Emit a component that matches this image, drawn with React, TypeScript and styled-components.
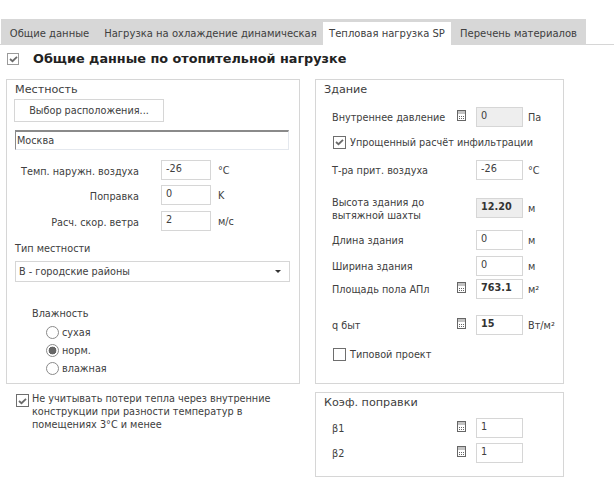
import React from 'react'
import styled, { createGlobalStyle } from 'styled-components'

const COLORS = {
  text: '#404040',
  border: '#d6d6d6',
  tabBar: '#d7d7d7',
  readonly: '#eeeeee',
  icon: '#666666',
}

const Global = createGlobalStyle`
  html, body {
    margin: 0;
    padding: 0;
    background: #fff;
  }
  body {
    font-family: "DejaVu Sans", "Liberation Sans", sans-serif;
    font-size: 9.7px;
    color: ${COLORS.text};
  }
`

const Page = styled.div`
  width: 614px;
  height: 503px;
  overflow: hidden;
  padding-top: 19px;
  box-sizing: border-box;
`

const TabBar = styled.div`
  display: flex;
  height: 25px;
  border-bottom: 1px solid ${COLORS.border};
`

const Tabs = styled.div`
  display: flex;
  width: 585px;
  margin-left: 1px;
  height: 26px;
  background: ${COLORS.tabBar};
  align-items: flex-end;
`

const Tab = styled.div<{ $active?: boolean; $width: number }>`
  width: ${p => p.$width}px;
  height: ${p => (p.$active ? 23 : 26)}px;
  background: ${p => (p.$active ? '#fff' : 'transparent')};
  display: flex;
  align-items: center;
  justify-content: center;
  white-space: nowrap;
  font-size: 10px;
  padding-top: ${p => (p.$active ? 0 : 3)}px;
  box-sizing: border-box;
`

const TitleRow = styled.div`
  display: flex;
  align-items: center;
  height: 17px;
  margin: 5px 0 0 7px;
  gap: 14px;
`

const Title = styled.div`
  font-size: 12.8px;
  font-weight: bold;
  color: #222;
`

const Columns = styled.div`
  display: flex;
  gap: 15px;
  margin: 12px 0 0 6px;
`

const Column = styled.div<{ $width: number }>`
  width: ${p => p.$width}px;
  display: flex;
  flex-direction: column;
`

const Panel = styled.section<{ $height: number; $gapTop?: number }>`
  height: ${p => p.$height}px;
  margin-top: ${p => p.$gapTop ?? 0}px;
  border: 1px solid ${COLORS.border};
  box-sizing: border-box;
  padding-left: 8px;
`

const PanelTitle = styled.div`
  font-size: 11.2px;
  height: 18px;
  line-height: 20px;
`

const ChooseButton = styled.button`
  display: block;
  width: 150px;
  height: 23px;
  margin: 1px 0 0 -1px;
  background: #fff;
  border: 1px solid ${COLORS.border};
  font: inherit;
  color: inherit;
  padding: 0;
`

const CityInput = styled.div`
  width: 274px;
  height: 20px;
  margin-top: 8px;
  box-sizing: border-box;
  border: 1px solid #e4e8ee;
  border-top: 2px solid #8a8a8a;
  border-left: 1px solid #8a8a8a;
  line-height: 18px;
  padding-left: 1px;
`

const FieldRow = styled.div<{ $top: number }>`
  display: flex;
  align-items: center;
  height: 20px;
  margin-top: ${p => p.$top}px;
`

const RightLabel = styled.div`
  width: 124px;
  text-align: right;
  padding-top: 2px;
  white-space: nowrap;
`

const Value = styled.div<{ $readonly?: boolean; $bold?: boolean; $width?: number }>`
  width: ${p => p.$width ?? 50}px;
  height: 20px;
  box-sizing: border-box;
  border: 1px solid ${COLORS.border};
  background: ${p => (p.$readonly ? COLORS.readonly : '#fff')};
  font-weight: ${p => (p.$bold ? 'bold' : 'normal')};
  color: ${p => (p.$bold ? '#333' : COLORS.text)};
  padding-left: 4px;
  line-height: 16px;
  flex: none;
`

const LeftValueSlot = styled.div`
  margin-left: 22px;
`

const Unit = styled.div<{ $gap?: number }>`
  margin-left: ${p => p.$gap ?? 7}px;
  padding-top: ${p => (p.$gap ? 1 : 0)}px;
  white-space: nowrap;
`

const FieldLabel = styled.div`
  margin-top: 12px;
  height: 12px;
  line-height: 12px;
`

const Select = styled.div`
  width: 275px;
  height: 21px;
  margin-top: 6px;
  box-sizing: border-box;
  border: 1px solid ${COLORS.border};
  display: flex;
  align-items: center;
  justify-content: space-between;
  padding: 0 8px 0 3px;
`

const Caret = styled.span`
  width: 0;
  height: 0;
  border-left: 3px solid transparent;
  border-right: 3px solid transparent;
  border-top: 3px solid #333;
`

const HumidityTitle = styled.div`
  margin: 26px 0 0 17px;
  height: 12px;
  line-height: 12px;
`

const RadioGroup = styled.div`
  display: flex;
  flex-direction: column;
  gap: 4px;
  margin: 5px 0 0 31px;
`

const RadioRow = styled.div`
  display: flex;
  align-items: center;
  gap: 3px;
  height: 14px;
`

const Radio = styled.span<{ $on?: boolean }>`
  width: 13px;
  height: 13px;
  box-sizing: border-box;
  border: 1px solid #8a8a8a;
  border-radius: 50%;
  background: ${p => (p.$on ? 'radial-gradient(circle, #666 0 3.6px, #fff 4.2px)' : '#fff')};
  flex: none;
`

const Box = styled.span<{ $muted?: boolean }>`
  width: ${p => (p.$muted ? 12 : 13)}px;
  height: ${p => (p.$muted ? 12 : 13)}px;
  box-sizing: border-box;
  border: 1px solid ${p => (p.$muted ? '#9a9a9a' : '#6e6e6e')};
  background: #fff;
  display: flex;
  align-items: center;
  justify-content: center;
  flex: none;
`

const Note = styled.div`
  display: flex;
  gap: 3px;
  margin: 9px 0 0 10px;
  line-height: 13px;
`

const NoteBox = styled.div`
  padding-top: 1px;
`

const NoteText = styled.div`
  margin-top: -1px;
  white-space: nowrap;
`

const BuildingRow = styled.div<{ $top: number }>`
  display: flex;
  align-items: center;
  height: 20px;
  margin: ${p => p.$top}px 0 0 8px;
`

const BuildingLabel = styled.div`
  width: 124px;
  padding-top: 1px;
  line-height: 13px;
  white-space: nowrap;
`

const CalcSlot = styled.div`
  width: 20px;
  height: 20px;
  display: flex;
  padding: 3px 0 0 1px;
  box-sizing: border-box;
`

const CheckRow = styled.div<{ $top: number }>`
  display: flex;
  align-items: center;
  gap: 4px;
  height: 14px;
  margin: ${p => p.$top}px 0 0 9px;
`

function Tick() {
  return (
    <svg width="9" height="8" viewBox="0 0 9 8">
      <path d="M1 4 L3.5 6.2 L8 1.8" fill="none" stroke="#6a6a6a" strokeWidth="1.8" />
    </svg>
  )
}

function Calc() {
  return (
    <svg width="9" height="11" viewBox="0 0 9 11">
      <rect x="0.5" y="0.5" width="8" height="10" fill="#fff" stroke={COLORS.icon} />
      <rect x="1" y="1" width="7" height="3" fill="#c4c4c4" />
      <path d="M2 6h1v1H2zM4 6h1v1H4zM6 6h1v1H6zM2 8h1v1H2zM4 8h1v1H4zM6 8h1v1H6z" fill={COLORS.icon} />
    </svg>
  )
}

const sup = '²'

export default function App() {
  return (
    <Page>
      <Global />
      <TabBar>
        <Tabs>
          <Tab $width={97}>Общие данные</Tab>
          <Tab $width={225}>Нагрузка на охлаждение динамическая</Tab>
          <Tab $width={128} $active>Тепловая нагрузка SP</Tab>
          <Tab $width={135}>Перечень материалов</Tab>
        </Tabs>
      </TabBar>

      <TitleRow>
        <Box $muted><Tick /></Box>
        <Title>Общие данные по отопительной нагрузке</Title>
      </TitleRow>

      <Columns>
        <Column $width={294}>
          <Panel $height={305}>
            <PanelTitle>Местность</PanelTitle>
            <ChooseButton>Выбор расположения...</ChooseButton>
            <CityInput>Москва</CityInput>
            <FieldRow $top={10}>
              <RightLabel>Темп. наружн. воздуха</RightLabel>
              <LeftValueSlot><Value>-26</Value></LeftValueSlot>
              <Unit>°C</Unit>
            </FieldRow>
            <FieldRow $top={5}>
              <RightLabel>Поправка</RightLabel>
              <LeftValueSlot><Value>0</Value></LeftValueSlot>
              <Unit>K</Unit>
            </FieldRow>
            <FieldRow $top={6}>
              <RightLabel>Расч. скор. ветра</RightLabel>
              <LeftValueSlot><Value>2</Value></LeftValueSlot>
              <Unit>м/с</Unit>
            </FieldRow>
            <FieldLabel>Тип местности</FieldLabel>
            <Select>
              В - городские районы
              <Caret />
            </Select>
            <HumidityTitle>Влажность</HumidityTitle>
            <RadioGroup>
              <RadioRow><Radio />сухая</RadioRow>
              <RadioRow><Radio $on />норм.</RadioRow>
              <RadioRow><Radio />влажная</RadioRow>
            </RadioGroup>
          </Panel>
          <Note>
            <NoteBox><Box><Tick /></Box></NoteBox>
            <NoteText>
              Не учитывать потери тепла через внутренние<br />
              конструкции при разности температур в<br />
              помещениях 3°C и менее
            </NoteText>
          </Note>
        </Column>

        <Column $width={249}>
          <Panel $height={305}>
            <PanelTitle>Здание</PanelTitle>
            <BuildingRow $top={9}>
              <BuildingLabel>Внутреннее давление</BuildingLabel>
              <CalcSlot><Calc /></CalcSlot>
              <Value $readonly $width={47}>0</Value>
              <Unit $gap={5}>Па</Unit>
            </BuildingRow>
            <CheckRow $top={8}>
              <Box><Tick /></Box>
              Упрощенный расчёт инфильтрации
            </CheckRow>
            <BuildingRow $top={11}>
              <BuildingLabel>Т-ра прит. воздуха</BuildingLabel>
              <CalcSlot />
              <Value $width={47}>-26</Value>
              <Unit $gap={5}>°C</Unit>
            </BuildingRow>
            <BuildingRow $top={18}>
              <BuildingLabel>Высота здания до<br />вытяжной шахты</BuildingLabel>
              <CalcSlot />
              <Value $readonly $bold $width={47}>12.20</Value>
              <Unit $gap={5}>м</Unit>
            </BuildingRow>
            <BuildingRow $top={12}>
              <BuildingLabel>Длина здания</BuildingLabel>
              <CalcSlot />
              <Value $width={47}>0</Value>
              <Unit $gap={5}>м</Unit>
            </BuildingRow>
            <BuildingRow $top={6}>
              <BuildingLabel>Ширина здания</BuildingLabel>
              <CalcSlot />
              <Value $width={47}>0</Value>
              <Unit $gap={5}>м</Unit>
            </BuildingRow>
            <BuildingRow $top={3}>
              <BuildingLabel>Площадь пола АПл</BuildingLabel>
              <CalcSlot><Calc /></CalcSlot>
              <Value $bold $width={47}>763.1</Value>
              <Unit $gap={5}>м{sup}</Unit>
            </BuildingRow>
            <BuildingRow $top={16}>
              <BuildingLabel>q быт</BuildingLabel>
              <CalcSlot><Calc /></CalcSlot>
              <Value $bold $width={47}>15</Value>
              <Unit $gap={5}>Вт/м{sup}</Unit>
            </BuildingRow>
            <CheckRow $top={12}>
              <Box />
              Типовой проект
            </CheckRow>
          </Panel>
          <Panel $height={85} $gapTop={8}>
            <PanelTitle>Коэф. поправки</PanelTitle>
            <BuildingRow $top={7}>
              <BuildingLabel>β1</BuildingLabel>
              <CalcSlot><Calc /></CalcSlot>
              <Value $width={47}>1</Value>
            </BuildingRow>
            <BuildingRow $top={5}>
              <BuildingLabel>β2</BuildingLabel>
              <CalcSlot><Calc /></CalcSlot>
              <Value $width={47}>1</Value>
            </BuildingRow>
          </Panel>
        </Column>
      </Columns>
    </Page>
  )
}
